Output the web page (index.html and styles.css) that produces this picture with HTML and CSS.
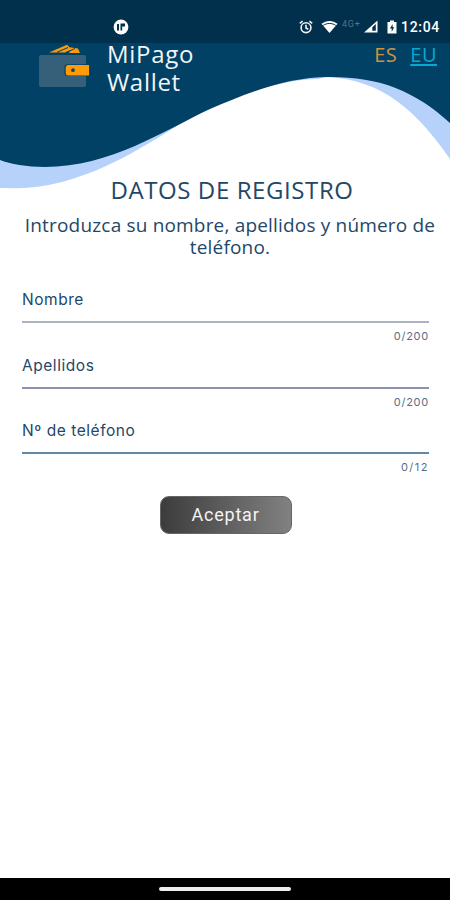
FILE: index.html
```html
<!DOCTYPE html>
<html lang="es">
  <head>
    <meta charset="UTF-8" />
    <meta name="viewport" content="width=device-width, initial-scale=1.0" />
    <title>MiPago Wallet</title>
    <link rel="stylesheet" href="styles.css">
  </head>
  <body>
    <div class="screen">
      <header class="header">
        <svg class="wave" viewBox="0 0 450 190" width="450" height="190">
          <path fill="#b7d2fa" d="M0 0H450V160C420 115 385 79 325 77L190 118C130 156 75 195 0 188Z" />
          <path fill="#fff" d="M0 188C75 193 135 152 190 118C230 97 280 79 320 79C385 83 418 113 450 159V190H0Z" />
          <path fill="#004165" d="M0 0H450V123C415 91 380 77 330 77C285 77 245 94 210 109C165 130 110 167 45 167C27 167 10 164 0 160Z" />
        </svg>

        <div class="status-bar">
          <svg class="notification" viewBox="0 0 16 16" width="16" height="16">
            <circle cx="8" cy="8" r="7.4" fill="#fff" />
            <path fill="#00304c" d="M4 5H6V11.5H4ZM7.5 4.5H12V7.5H9.2V11.5H7.5Z" />
          </svg>
          <div class="status-icons">
            <svg class="alarm" viewBox="0 0 14 14" width="14" height="14" fill="none" stroke="#f2f5f7" stroke-width="1.6">
              <circle cx="7" cy="7.7" r="4.9" />
              <path d="M.8 3.4L3.6 1.1M13.2 3.4L10.4 1.1M7 4.7V8L9.3 9.3" />
            </svg>
            <svg class="wifi" viewBox="0 0 17 14" width="17" height="14">
              <path fill="#fff" d="M.5 3.8C5-.1 12-.1 16.5 3.8L8.5 13Z" />
              <path fill="none" stroke="#00304c" stroke-width="1" d="M2.2 5.4C6 2.8 11 2.8 14.8 5.4" />
            </svg>
            <span class="network">4G+</span>
            <svg class="signal" viewBox="0 0 14 13" width="14" height="13">
              <path fill="#fff" fill-rule="evenodd" d="M0 12.5L13.5 .5V12.5ZM8.3 10.8H11.8V4.1L8.3 7.2Z" />
            </svg>
            <svg class="battery" viewBox="0 0 10 14" width="10" height="14">
              <path fill="#fff" d="M3 .5H7V2H9.5V13.5H.5V2H3Z" />
              <path fill="#00304c" d="M5.6 4L3 8.6H4.7V11.8L7.2 7.2H5.6Z" />
            </svg>
            <span class="clock">12:04</span>
          </div>
        </div>

        <div class="brand-bar">
          <svg class="wallet" viewBox="0 0 50 44" width="50" height="44">
            <path fill="#f79a0b" d="M10 9.5L28 1.8L30.5 4.3L39 5.5L41 10H30L31 7.5L26 9.5Z" />
            <path stroke="#004165" stroke-width="1" d="M18 9.3L29 4.5M27 9.5L36 5.5" />
            <rect x="0" y="12" width="47" height="32" rx="2" fill="#365f79" />
            <rect x="25.5" y="21.3" width="25" height="11.6" rx="3" fill="#004165" />
            <path fill="#ff9b05" d="M29 22H50V32.5H29Q26.7 32.5 26.7 30V24.5Q26.7 22 29 22Z" />
            <circle cx="34" cy="27.2" r="1.9" fill="#24445a" />
          </svg>
          <h1 class="brand">MiPago<br>Wallet</h1>
          <nav class="languages">
            <span class="lang current">ES</span>
            <a class="lang other">EU</a>
          </nav>
        </div>
      </header>

      <main class="content">
        <h2 class="title">DATOS DE REGISTRO</h2>
        <p class="intro">Introduzca su nombre, apellidos y número de<br>teléfono.</p>

        <form class="form">
          <div class="field">
            <label class="label">Nombre</label>
            <div class="line soft"></div>
            <span class="counter">0/200</span>
          </div>
          <div class="field">
            <label class="label">Apellidos</label>
            <div class="line violet"></div>
            <span class="counter">0/200</span>
          </div>
          <div class="field">
            <label class="label">Nº de teléfono</label>
            <div class="line"></div>
            <span class="counter short">0/12</span>
          </div>
          <button class="accept" type="button">Aceptar</button>
        </form>
      </main>

      <footer class="nav-bar">
        <div class="handle"></div>
      </footer>
    </div>
  </body>
</html>
```
FILE: styles.css
```css
* {
  box-sizing: border-box;
}

body {
  margin: 0;
  font-family: "Open Sans", "Noto Sans", sans-serif;
  background: #fff;
  color: #244768;
}

.screen {
  width: 450px;
  height: 900px;
  display: flex;
  flex-direction: column;
  overflow: hidden;
}

.header {
  position: relative;
  height: 176px;
  flex: none;
}

/* wave drawn behind the header content */
.wave {
  position: absolute;
  top: 0;
  left: 0;
}

.status-bar {
  position: relative;
  height: 43px;
  padding: 10px 10px 0 113px;
  display: flex;
  align-items: center;
  justify-content: space-between;
  background: #00304c;
}

.status-icons {
  display: flex;
  align-items: center;
  color: #fff;
  font-family: Roboto, sans-serif;
}

.wifi {
  margin-left: 8px;
}

.network {
  width: 22px;
  margin: -5px 0 0 4px;
  font-size: 9px;
  letter-spacing: 0.8px;
  color: #50758b;
}

.battery {
  margin-left: 9px;
}

.clock {
  margin-left: 4px;
  font-size: 14px;
  font-weight: 500;
  letter-spacing: 0.7px;
}

.brand-bar {
  position: relative;
  display: flex;
  align-items: flex-start;
  padding: 0 13px 0 39px;
}

.brand {
  margin: -3px 0 0 18px;
  font-size: 24px;
  font-weight: 400;
  line-height: 28px;
  letter-spacing: 0.7px;
  color: #f1f5f9;
}

.languages {
  display: flex;
  gap: 13px;
  margin-left: auto;
  font-size: 20px;
  line-height: 24px;
  letter-spacing: 0.5px;
}

.current {
  color: #cf923f;
}

.other {
  color: #08a9d1;
  text-decoration: underline;
  text-underline-offset: 2px;
}

.content {
  position: relative;
  flex: 1;
}

.title {
  margin: 0;
  text-align: center;
  font-size: 24px;
  font-weight: 400;
  line-height: 28px;
  letter-spacing: 0.6px;
  padding-left: 14px;
}

.intro {
  margin: 10px 0 0;
  padding-left: 10px;
  text-align: center;
  font-size: 19px;
  line-height: 22px;
  letter-spacing: 0.18px;
  white-space: nowrap;
}

.form {
  display: flex;
  flex-direction: column;
  padding: 30px 21px 0 22px;
  font-family: Inter, Roboto, sans-serif;
}

.field {
  display: flex;
  flex-direction: column;
  height: 65.7px;
}

.label {
  height: 33px;
  font-size: 15.5px;
  line-height: 24px;
  letter-spacing: 0.55px;
}

.line {
  height: 2px;
  background: #6488a4;
}

.soft {
  background: #aab3c4;
}

.violet {
  background: #8c91b0;
}

.counter {
  align-self: flex-end;
  margin-top: 5px;
  font-size: 11px;
  line-height: 16px;
  letter-spacing: 0.75px;
  color: #5b6c85;
}

.short {
  letter-spacing: 1.5px;
}

.accept {
  align-self: center;
  width: 132px;
  height: 38px;
  margin-top: 11px;
  padding-bottom: 3px;
  border: 1px solid #666;
  border-radius: 9px;
  background: linear-gradient(90deg, #3c3c3c, #818181);
  color: #f4f4f4;
  font-family: Roboto, sans-serif;
  font-size: 18px;
  letter-spacing: 0.8px;
}

.nav-bar {
  height: 22px;
  display: flex;
  justify-content: center;
  padding-top: 9px;
  background: #000;
}

.handle {
  width: 132px;
  height: 4px;
  border-radius: 2px;
  background: #eee;
}
```
